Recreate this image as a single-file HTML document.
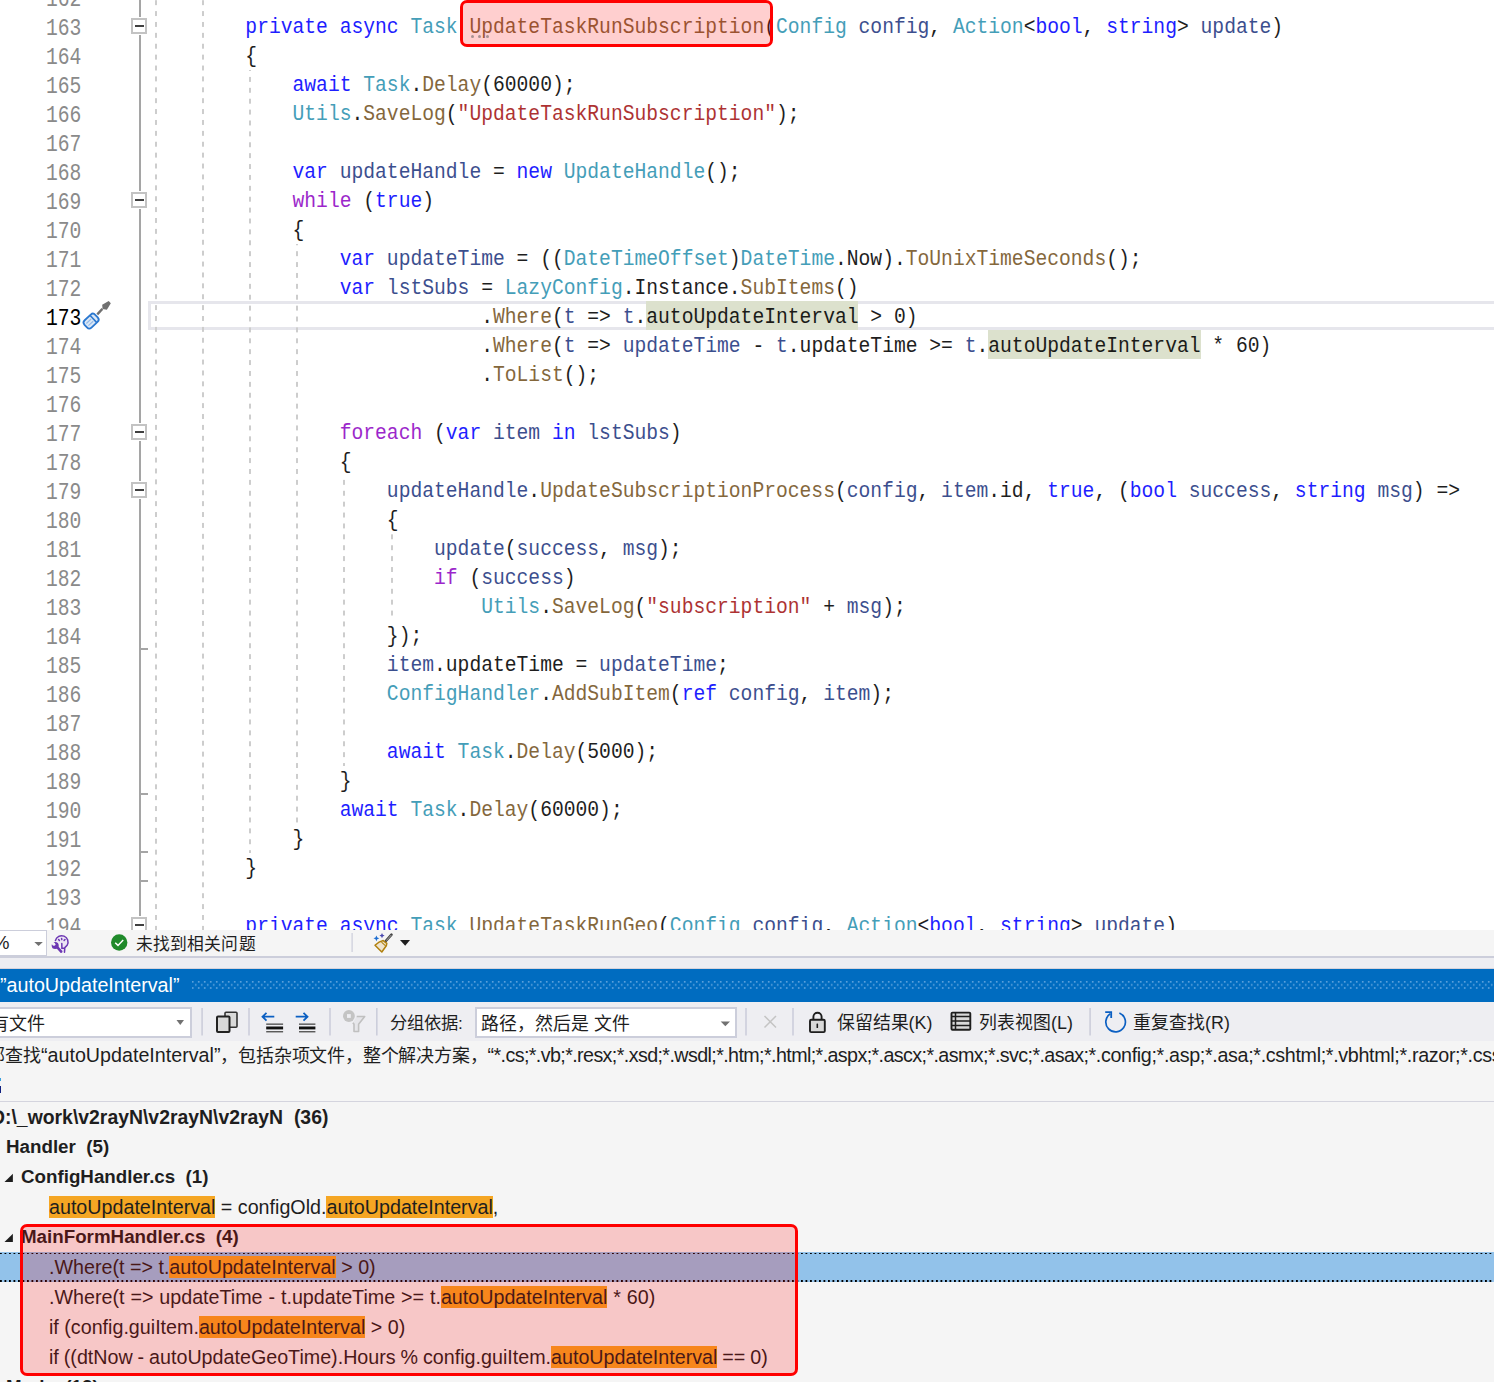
<!DOCTYPE html>
<html lang="zh-CN"><head><meta charset="utf-8">
<style>
html,body{margin:0;padding:0;}
body{width:1494px;height:1382px;overflow:hidden;position:relative;background:#fff;font-family:"Liberation Sans",sans-serif;}
#editor{position:absolute;left:0;top:0;width:1494px;height:930px;overflow:hidden;background:#fff;}
.code{position:absolute;left:151px;white-space:pre;font-family:"Liberation Mono",monospace;font-size:22px;line-height:29px;color:#000;opacity:0.88;transform:scaleX(0.89318);transform-origin:0 0;}
.ln{position:absolute;left:46px;white-space:pre;font-family:"Liberation Mono",monospace;font-size:23px;line-height:29px;color:#8a8a8a;transform:scaleX(0.85435);transform-origin:0 0;}
.ln.cur{color:#000;}
.curline{position:absolute;left:148px;width:1360px;height:23px;border:3px solid #e6e6ec;}
.refhl{position:absolute;height:29px;background:#dce1cd;}
.guide{position:absolute;width:2px;background-image:linear-gradient(#cdcdcd 0,#cdcdcd 4.7px,transparent 4.7px);background-size:2px 10.9px;}
.foldline{position:absolute;left:139px;width:2px;background:#a5a5a5;}
.foldbox{position:absolute;left:131px;width:12px;height:12px;border:2px solid #c3c3c3;background:#fff;}
.foldbox i{position:absolute;left:2px;top:5px;width:9px;height:2px;background:#404040;}
.tick{position:absolute;left:140px;width:8px;height:2px;background:#a5a5a5;}
.redbox{position:absolute;border:3px solid #ff0000;border-radius:7px;background:rgba(255,0,0,0.19);box-sizing:border-box;}
.dots{position:absolute;left:471px;top:34.6px;}
.dots i{position:absolute;width:3px;height:3px;border-radius:50%;background:#a89090;}

#status{position:absolute;left:0;top:930px;width:1494px;height:26px;background:#f5f5f5;border-bottom:2px solid #cccedb;}
#band{position:absolute;left:0;top:958px;width:1494px;height:9.5px;background:#eeeef2;border-bottom:1.5px solid #d6d3dc;}
#title{position:absolute;left:0;top:969px;width:1494px;height:33px;background:#006cc0;color:#fff;}
#toolbar{position:absolute;left:0;top:1002px;width:1494px;height:39px;background:#eeeef2;}
#desc{position:absolute;left:0;top:1041px;width:1494px;height:60px;background:#f5f5f5;border-bottom:1.5px solid #d4d4de;}
#results{position:absolute;left:0;top:1102px;width:1494px;height:280px;background:#f5f5f5;}
.t{position:absolute;white-space:pre;}

.b{font-weight:bold;font-size:19.4px;line-height:22px;color:#1e1e1e;}
.r{font-size:19.7px;line-height:22px;color:#1e1e1e;}
.hl{background:#f5a623;padding:0 0 0.8px;}
.cj{font-size:18px;}
.sel{position:absolute;left:0;width:1494px;height:30px;background:#92c2ea;}
.sel:before,.sel:after{content:"";position:absolute;left:0;width:1494px;height:1.5px;background-image:linear-gradient(90deg,#000 0,#000 1.5px,transparent 1.5px);background-size:4.5px 1.5px;}
.sel:before{top:0.5px}.sel:after{bottom:0.5px}
</style></head><body>
<div id="editor">
<div class="curline" style="top:301.0px"></div>
<div class="refhl" style="left:646px;top:301.0px;width:212px"></div>
<div class="refhl" style="left:988px;top:330.0px;width:213px"></div>
<div class="guide" style="left:155px;top:-20.0px;height:950.0px;background-position:0 20.20px"></div>
<div class="guide" style="left:202px;top:-20.0px;height:950.0px;background-position:0 20.20px"></div>
<div class="guide" style="left:249px;top:69.5px;height:783.0px;background-position:0 -69.30px"></div>
<div class="guide" style="left:296px;top:243.5px;height:580.0px;background-position:0 -243.30px"></div>
<div class="guide" style="left:343px;top:475.5px;height:290.0px;background-position:0 -475.30px"></div>
<div class="guide" style="left:391px;top:533.5px;height:87.0px;background-position:0 -533.30px"></div>
<div class="foldline" style="top:-5.0px;height:21.8px"></div>
<div class="foldline" style="top:35.0px;height:155.8px"></div>
<div class="foldline" style="top:209.0px;height:213.8px"></div>
<div class="foldline" style="top:441.0px;height:39.8px"></div>
<div class="foldline" style="top:499.0px;height:416.8px"></div>
<div class="foldline" style="top:934.0px;height:1.0px"></div>
<div class="foldbox" style="top:18px"><i></i></div>
<div class="foldbox" style="top:192px"><i></i></div>
<div class="foldbox" style="top:424px"><i></i></div>
<div class="foldbox" style="top:482px"><i></i></div>
<div class="foldbox" style="top:917px"><i></i></div>
<div class="tick" style="top:647.5px"></div>
<div class="tick" style="top:792.5px"></div>
<div class="tick" style="top:850.5px"></div>
<div class="tick" style="top:879.5px"></div>
<div class="ln" style="top:-14.0px">162</div>
<div class="ln" style="top:15.0px">163</div>
<div class="ln" style="top:44.0px">164</div>
<div class="ln" style="top:73.0px">165</div>
<div class="ln" style="top:102.0px">166</div>
<div class="ln" style="top:131.0px">167</div>
<div class="ln" style="top:160.0px">168</div>
<div class="ln" style="top:189.0px">169</div>
<div class="ln" style="top:218.0px">170</div>
<div class="ln" style="top:247.0px">171</div>
<div class="ln" style="top:276.0px">172</div>
<div class="ln cur" style="top:305.0px">173</div>
<div class="ln" style="top:334.0px">174</div>
<div class="ln" style="top:363.0px">175</div>
<div class="ln" style="top:392.0px">176</div>
<div class="ln" style="top:421.0px">177</div>
<div class="ln" style="top:450.0px">178</div>
<div class="ln" style="top:479.0px">179</div>
<div class="ln" style="top:508.0px">180</div>
<div class="ln" style="top:537.0px">181</div>
<div class="ln" style="top:566.0px">182</div>
<div class="ln" style="top:595.0px">183</div>
<div class="ln" style="top:624.0px">184</div>
<div class="ln" style="top:653.0px">185</div>
<div class="ln" style="top:682.0px">186</div>
<div class="ln" style="top:711.0px">187</div>
<div class="ln" style="top:740.0px">188</div>
<div class="ln" style="top:769.0px">189</div>
<div class="ln" style="top:798.0px">190</div>
<div class="ln" style="top:827.0px">191</div>
<div class="ln" style="top:856.0px">192</div>
<div class="ln" style="top:885.0px">193</div>
<div class="ln" style="top:914.0px">194</div>
<div class="code" style="top:13.3px">        <span style="color:#0000FF">private</span> <span style="color:#0000FF">async</span> <span style="color:#2B91AF">Task</span> <span style="color:#74531F">UpdateTaskRunSubscription</span>(<span style="color:#2B91AF">Config</span> <span style="color:#1F377F">config</span>, <span style="color:#2B91AF">Action</span>&lt;<span style="color:#0000FF">bool</span>, <span style="color:#0000FF">string</span>&gt; <span style="color:#1F377F">update</span>)</div>
<div class="code" style="top:42.3px">        {</div>
<div class="code" style="top:71.3px">            <span style="color:#0000FF">await</span> <span style="color:#2B91AF">Task</span>.<span style="color:#74531F">Delay</span>(60000);</div>
<div class="code" style="top:100.3px">            <span style="color:#2B91AF">Utils</span>.<span style="color:#74531F">SaveLog</span>(<span style="color:#A31515">"UpdateTaskRunSubscription"</span>);</div>
<div class="code" style="top:158.3px">            <span style="color:#0000FF">var</span> <span style="color:#1F377F">updateHandle</span> = <span style="color:#0000FF">new</span> <span style="color:#2B91AF">UpdateHandle</span>();</div>
<div class="code" style="top:187.3px">            <span style="color:#8F08C4">while</span> (<span style="color:#0000FF">true</span>)</div>
<div class="code" style="top:216.3px">            {</div>
<div class="code" style="top:245.3px">                <span style="color:#0000FF">var</span> <span style="color:#1F377F">updateTime</span> = ((<span style="color:#2B91AF">DateTimeOffset</span>)<span style="color:#2B91AF">DateTime</span>.Now).<span style="color:#74531F">ToUnixTimeSeconds</span>();</div>
<div class="code" style="top:274.3px">                <span style="color:#0000FF">var</span> <span style="color:#1F377F">lstSubs</span> = <span style="color:#2B91AF">LazyConfig</span>.Instance.<span style="color:#74531F">SubItems</span>()</div>
<div class="code" style="top:303.3px">                            .<span style="color:#74531F">Where</span>(<span style="color:#1F377F">t</span> =&gt; <span style="color:#1F377F">t</span>.autoUpdateInterval &gt; 0)</div>
<div class="code" style="top:332.3px">                            .<span style="color:#74531F">Where</span>(<span style="color:#1F377F">t</span> =&gt; <span style="color:#1F377F">updateTime</span> - <span style="color:#1F377F">t</span>.updateTime &gt;= <span style="color:#1F377F">t</span>.autoUpdateInterval * 60)</div>
<div class="code" style="top:361.3px">                            .<span style="color:#74531F">ToList</span>();</div>
<div class="code" style="top:419.3px">                <span style="color:#8F08C4">foreach</span> (<span style="color:#0000FF">var</span> <span style="color:#1F377F">item</span> <span style="color:#0000FF">in</span> <span style="color:#1F377F">lstSubs</span>)</div>
<div class="code" style="top:448.3px">                {</div>
<div class="code" style="top:477.3px">                    <span style="color:#1F377F">updateHandle</span>.<span style="color:#74531F">UpdateSubscriptionProcess</span>(<span style="color:#1F377F">config</span>, <span style="color:#1F377F">item</span>.id, <span style="color:#0000FF">true</span>, (<span style="color:#0000FF">bool</span> <span style="color:#1F377F">success</span>, <span style="color:#0000FF">string</span> <span style="color:#1F377F">msg</span>) =&gt;</div>
<div class="code" style="top:506.3px">                    {</div>
<div class="code" style="top:535.3px">                        <span style="color:#1F377F">update</span>(<span style="color:#1F377F">success</span>, <span style="color:#1F377F">msg</span>);</div>
<div class="code" style="top:564.3px">                        <span style="color:#8F08C4">if</span> (<span style="color:#1F377F">success</span>)</div>
<div class="code" style="top:593.3px">                            <span style="color:#2B91AF">Utils</span>.<span style="color:#74531F">SaveLog</span>(<span style="color:#A31515">"subscription"</span> + <span style="color:#1F377F">msg</span>);</div>
<div class="code" style="top:622.3px">                    });</div>
<div class="code" style="top:651.3px">                    <span style="color:#1F377F">item</span>.updateTime = <span style="color:#1F377F">updateTime</span>;</div>
<div class="code" style="top:680.3px">                    <span style="color:#2B91AF">ConfigHandler</span>.<span style="color:#74531F">AddSubItem</span>(<span style="color:#0000FF">ref</span> <span style="color:#1F377F">config</span>, <span style="color:#1F377F">item</span>);</div>
<div class="code" style="top:738.3px">                    <span style="color:#0000FF">await</span> <span style="color:#2B91AF">Task</span>.<span style="color:#74531F">Delay</span>(5000);</div>
<div class="code" style="top:767.3px">                }</div>
<div class="code" style="top:796.3px">                <span style="color:#0000FF">await</span> <span style="color:#2B91AF">Task</span>.<span style="color:#74531F">Delay</span>(60000);</div>
<div class="code" style="top:825.3px">            }</div>
<div class="code" style="top:854.3px">        }</div>
<div class="code" style="top:912.3px">        <span style="color:#0000FF">private</span> <span style="color:#0000FF">async</span> <span style="color:#2B91AF">Task</span> <span style="color:#74531F">UpdateTaskRunGeo</span>(<span style="color:#2B91AF">Config</span> <span style="color:#1F377F">config</span>, <span style="color:#2B91AF">Action</span>&lt;<span style="color:#0000FF">bool</span>, <span style="color:#0000FF">string</span>&gt; <span style="color:#1F377F">update</span>)</div>
<svg style="position:absolute;left:78px;top:298px" width="36" height="36">
<g transform="rotate(-43 13.1 23.1)"><rect x="5.75" y="18.1" width="14.7" height="10" rx="3.2" fill="#dce8f6" stroke="#2b78d0" stroke-width="1.8"/>
<path d="M16.2,18.1 V28.1" stroke="#2b78d0" stroke-width="1.6"/>
<path d="M8,21.6 H14.5 M8,24.6 H14.5" stroke="#94bbe8" stroke-width="1.2"/></g>
<path d="M19.3,16.4 L24.4,10.9" stroke="#707070" stroke-width="2.3"/>
<polygon points="24.2,6.8 30.7,3.1 32.8,5.2 28.9,11.7 24.5,10.9" fill="#707070"/>
</svg>
<div class="redbox" style="left:460px;top:0px;width:313px;height:47px"></div>
<div class="dots"><i style="left:0"></i><i style="left:7.3px"></i><i style="left:14.7px"></i></div>
</div>

<div id="status">
 <div style="position:absolute;left:-1px;top:0;width:48px;height:26px;box-sizing:border-box;border:1px solid #cccedb;background:#fff;"></div>
 <div class="t" style="left:-7px;top:2px;font-size:18.5px;line-height:22px;color:#1e1e1e">%</div>
 <svg style="position:absolute;left:0;top:0" width="1494" height="26">
  <polygon points="34.3,12 42.8,12 38.55,16" fill="#717171"/>
  <g fill="none" stroke="#6d37b3" stroke-width="1.5" stroke-linecap="round">
   <path d="M55.4,10.6 A6.4,6.4 0 1 1 67.1,15.4 L64.8,17.7 L64.5,22.2 L61.9,22.2 L61.9,15 Z" fill="#ece6f4" stroke="none"/>
   <path d="M55.4,10.6 A6.4,6.4 0 1 1 67.1,15.4 L64.8,17.7 L64.5,22.2"/>
   <path d="M61.8,13.4 L61.9,18.3 L63.8,18.3"/>
   <path d="M61.6,8.4 L61.8,9.6 M58.6,9.5 L59.4,10.4 M65,9.5 L64.1,10.4"/>
  </g>
  <path d="M57.2,17.2 L61.2,21.6" stroke="#6d37b3" stroke-width="2.6" stroke-linecap="round"/>
  <circle cx="55.2" cy="15.6" r="3.5" fill="#6d37b3"/>
  <circle cx="53.9" cy="14.2" r="1.5" fill="#f5f5f5"/>
  <path d="M53.9,14.2 L51,11.3" stroke="#f5f5f5" stroke-width="2.6"/>
  <circle cx="119.2" cy="12.5" r="8.2" fill="#1f8a2a"/>
  <path d="M115.2,12.8 L118,15.4 L123.2,10" fill="none" stroke="#fff" stroke-width="1.5"/>
  <rect x="351.5" y="3" width="1.2" height="19" fill="#cccedb"/>
  <path d="M391.5,4.6 L385.8,11" stroke="#444" stroke-width="2.6" stroke-linecap="round"/>
  <path d="M391.3,5 L386.3,10.6" stroke="#bbb" stroke-width="0.8"/>
  <path d="M383.2,10.6 L386.8,13.3 L386.3,15.8 L381.8,22 L375,15.2 Q379,11.6 383.2,10.6z" fill="#efe4cf" stroke="#b0800e" stroke-width="1.5" stroke-linejoin="round"/>
  <path d="M381.5,12.2 L385.6,15.8" stroke="#b0800e" stroke-width="1.1"/>
  <path d="M376.4,5.4 l.9,2 2,.9 -2,.9 -.9,2 -.9,-2 -2,-.9 2,-.9z" fill="#1f6fd1"/>
  <path d="M382,3 l.8,1.8 1.8,.8 -1.8,.8 -.8,1.8 -.8,-1.8 -1.8,-.8 1.8,-.8z" fill="#4a48b0"/>
  <polygon points="400,10.1 410,10.1 405.2,15.7" fill="#1e1e1e"/>
 </svg>
 <div class="t" style="left:135.5px;top:4.3px;font-size:16.8px;letter-spacing:0.2px;line-height:22px;color:#1e1e1e">未找到相关问题</div>
</div>
<div id="band"></div>
<div id="title">
 <div class="t" style="left:0px;top:5px;font-size:19.7px;line-height:22px;color:#fff">”autoUpdateInterval”</div>
 <svg style="position:absolute;left:0;top:0" width="1494" height="33">
  <defs><pattern id="grip" x="191.9" y="12" width="6" height="6.2" patternUnits="userSpaceOnUse">
   <rect x="0" y="0" width="1.6" height="1.6" fill="#5fa3dd"/>
   <rect x="3" y="3.1" width="1.6" height="1.6" fill="#5fa3dd"/>
  </pattern></defs>
  <rect x="191.9" y="12" width="1302" height="8" fill="url(#grip)"/>
 </svg>
</div>
<div id="toolbar">
 <div style="position:absolute;left:-2px;top:5px;width:194px;height:31px;box-sizing:border-box;border:2px solid #cccedb;background:#fff"></div>
 <div class="t" style="left:-9px;top:11px;font-size:18px;line-height:22px;color:#1e1e1e">有文件</div>
 <div style="position:absolute;left:475px;top:5px;width:262px;height:31px;box-sizing:border-box;border:2px solid #cccedb;background:#fff"></div>
 <div class="t" style="left:481px;top:11px;font-size:17.9px;line-height:22px;color:#1e1e1e">路径，然后是 文件</div>
 <div class="t" style="left:390px;top:10px;font-size:17.3px;line-height:22px;color:#1e1e1e">分组依据:</div>
 <div class="t" style="left:836.6px;top:10px;font-size:17.9px;line-height:22px;color:#1e1e1e">保留结果(K)</div>
 <div class="t" style="left:979px;top:10px;font-size:17.9px;line-height:22px;color:#1e1e1e">列表视图(L)</div>
 <div class="t" style="left:1133px;top:10px;font-size:17.9px;line-height:22px;color:#1e1e1e">重复查找(R)</div>
 <svg style="position:absolute;left:0;top:0" width="1494" height="39">
  <polygon points="176.5,18 184,18 180.25,23" fill="#717171"/>
  <polygon points="720.7,19.4 730,19.4 725.35,24.2" fill="#717171"/>
  <g fill="#cccedb">
   <rect x="201.3" y="6" width="1.6" height="27.5"/><rect x="248.2" y="6" width="1.6" height="27.5"/>
   <rect x="329.2" y="6" width="1.6" height="27.5"/><rect x="376" y="6" width="1.6" height="27.5"/>
   <rect x="745.2" y="6" width="1.6" height="27.5"/><rect x="792.2" y="6" width="1.6" height="27.5"/>
   <rect x="1089.3" y="6" width="1.6" height="27.5"/>
  </g>
  <rect x="225" y="10.3" width="12" height="15" rx="1" fill="#d9d9d9" stroke="#333" stroke-width="1.6"/>
  <rect x="217" y="14.5" width="12.5" height="15.5" rx="1" fill="#d9d9d9" stroke="#222" stroke-width="2"/>
  <g stroke="#0b5fc2" stroke-width="1.8" fill="none"><path d="M262.5,14.7 H274.3 M266.5,10.8 L262.5,14.7 L266.5,18.6"/><path d="M295.7,14.7 H307.5 M303.5,10.8 L307.5,14.7 L303.5,18.6"/></g>
  <g fill="#4a4a4a"><rect x="266.2" y="21.5" width="16.9" height="1.3"/><rect x="266.2" y="29.1" width="16.9" height="1.3"/>
   <rect x="299" y="21.5" width="16.4" height="1.3"/><rect x="299" y="29.1" width="16.4" height="1.3"/></g>
  <g fill="#111"><rect x="266.2" y="24.5" width="16.9" height="2.9"/><rect x="299" y="24.5" width="16.4" height="2.9"/></g>
  <circle cx="348.9" cy="14" r="5.9" fill="#c4c4c4"/><rect x="347" y="12.1" width="3.8" height="3.8" fill="#eeeef2"/>
  <path d="M356.7,14.5 H364.7 L358.6,22.3 V29.5 H354 V22.3 L352.9,20.7" fill="#e6e6ea" stroke="#c0c0c0" stroke-width="1.6" stroke-linejoin="round"/>
  <path d="M764.5,14 L776,25.5 M776,14 L764.5,25.5" stroke="#c4c4c4" stroke-width="1.5"/>
  <g><path d="M813.4,17.5 V14.8 A4.1,4.1 0 0 1 821.6,14.8 V17.5" fill="none" stroke="#1e1e1e" stroke-width="1.9"/>
   <rect x="810" y="17.8" width="14.8" height="12.3" rx="1.2" fill="#d9d9d9" stroke="#1e1e1e" stroke-width="1.9"/>
   <rect x="816.5" y="21.4" width="1.6" height="4.6" rx="0.6" fill="#1e1e1e"/></g>
  <g><rect x="951.5" y="10.6" width="18.8" height="17.2" rx="1" fill="#d9d9d9" stroke="#1e1e1e" stroke-width="1.9"/>
   <path d="M951.5,14.5 H970.3 M951.5,19.1 H970.3 M951.5,23.5 H970.3 M955.5,10.6 V27.8" stroke="#1e1e1e" stroke-width="1.5"/></g>
  <path d="M1119.4,11 A9.8,9.8 0 1 1 1110.3,11.8" fill="none" stroke="#0b5fc2" stroke-width="1.7"/>
  <path d="M1105.2,10.2 H1111.2 V16" fill="none" stroke="#0b5fc2" stroke-width="1.8"/>
 </svg>
</div>
<div id="desc">
 <div class="t" style="left:-13px;top:3px;font-size:19.7px;line-height:22px;color:#1e1e1e"><span class="cj">部查找</span>“autoUpdateInterval”<span class="cj" style="letter-spacing:-0.2px">，包括杂项文件，整个解决方案，</span><span style="letter-spacing:-0.6px">“*.cs;*.vb;*.resx;*.xsd;*.wsdl;*.htm;*.html;*.aspx;*.ascx;*.asmx;*.svc;*.asax;</span><span style="letter-spacing:-0.33px">*.config;*.asp;*.asa;*.cshtml;*.vbhtml;*.razor;*.css;*.ts</span></div>
 <div style="position:absolute;left:0;top:37px;width:1.2px;height:2.5px;background:#3aa0e0"></div>
 <div style="position:absolute;left:0;top:45px;width:1.2px;height:7px;background:#102080"></div>
</div>
<div id="results">
 <div class="sel" style="top:150px"></div>
 <svg style="position:absolute;left:0;top:0" width="40" height="280">
  <polygon points="12.9,71.8 12.9,80 4.5,80" fill="#1e1e1e"/>
  <polygon points="12.9,131.8 12.9,140 4.5,140" fill="#1e1e1e"/>
 </svg>
 <div class="t b" style="left:-9px;top:3.6px">D:\_work\v2rayN\v2rayN\v2rayN  (36)</div>
 <div class="t b" style="font-size:18.75px;left:6px;top:33.6px">Handler  (5)</div>
 <div class="t b" style="font-size:18.75px;left:21px;top:63.6px">ConfigHandler.cs  (1)</div>
 <div class="t r" id="r3" style="left:49px;top:93.6px"><span class="hl">autoUpdateInterval</span> = configOld.<span class="hl">autoUpdateInterval</span>,</div>
 <div class="t b" style="font-size:18.75px;left:21px;top:123.6px">MainFormHandler.cs  (4)</div>
 <div class="t r" id="r5" style="left:49px;top:153.6px">.Where(t =&gt; t.<span class="hl">autoUpdateInterval</span> &gt; 0)</div>
 <div class="t r" id="r6" style="word-spacing:0.45px;left:49px;top:183.6px">.Where(t =&gt; updateTime - t.updateTime &gt;= t.<span class="hl">autoUpdateInterval</span> * 60)</div>
 <div class="t r" id="r7" style="left:49px;top:213.6px">if (config.guiItem.<span class="hl">autoUpdateInterval</span> &gt; 0)</div>
 <div class="t r" id="r8" style="word-spacing:-0.55px;left:49px;top:243.6px">if ((dtNow - autoUpdateGeoTime).Hours % config.guiItem.<span class="hl">autoUpdateInterval</span> == 0)</div>
 <div class="t b" style="font-size:18.75px;left:6px;top:273.6px">Mode  (12)</div>
 <div class="redbox" style="left:20px;top:122px;width:778px;height:152px"></div>
</div>
</body></html>
